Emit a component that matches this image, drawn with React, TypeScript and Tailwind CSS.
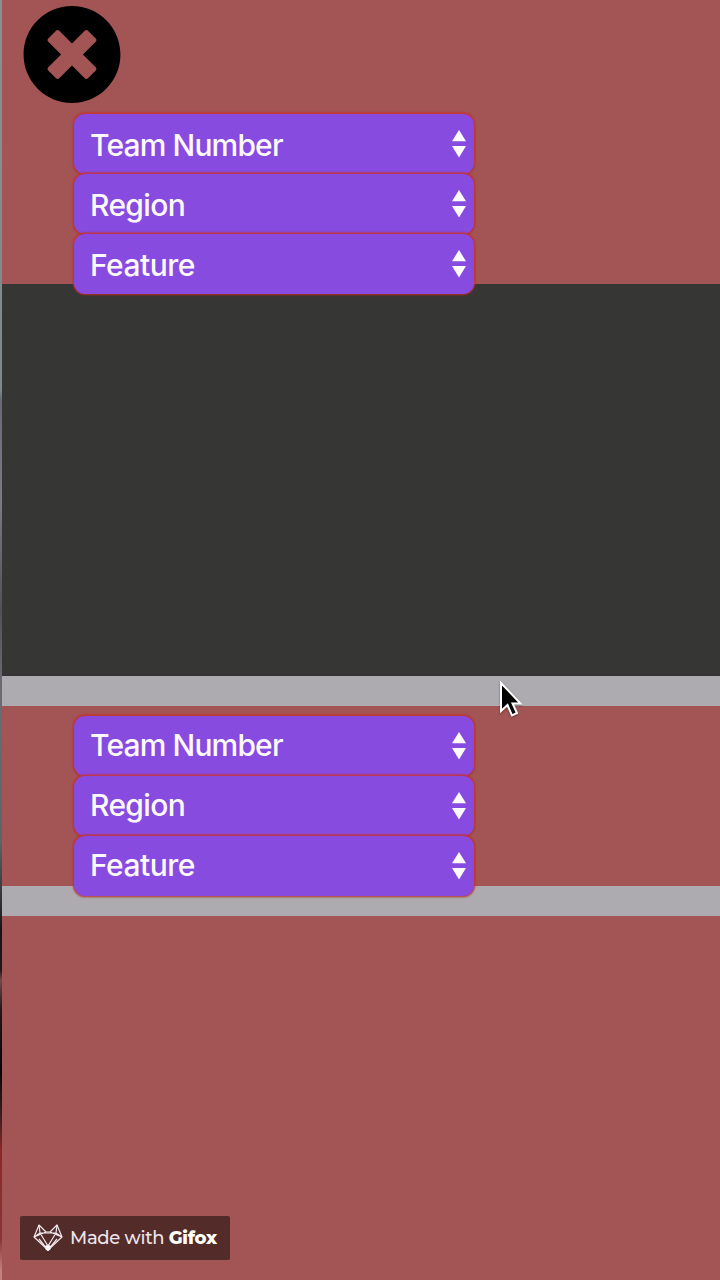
import clsx from "clsx";
import { FaTimesCircle } from "react-icons/fa";

const FIELDS = [
  { label: "Team Number", tracking: "tracking-[-0.85px]" },
  { label: "Region", tracking: "tracking-[-0.65px]" },
  { label: "Feature", tracking: "tracking-[-0.5px]" },
];

type SelectBoxProps = { label: string; tracking: string; raised?: boolean };

function SelectBox({ label, tracking, raised }: SelectBoxProps) {
  return (
    <button
      type="button"
      className="relative flex h-[60px] w-[400px] items-center justify-between rounded-[11px] bg-[#874bdf] pr-2 pl-4 text-left shadow-[0_-1px_1px_1px_rgba(200,48,50,0.45),0_0_2px_1px_rgba(205,48,34,0.8),0_1px_2px_rgba(90,20,15,0.3)]"
    >
      <span
        className={clsx(
          "text-[30px] leading-none font-medium text-[#fbf9ff]",
          tracking,
          raised ? "mb-[3px]" : "mt-[1px]",
        )}
      >
        {label}
      </span>
      <svg width="14" height="28" viewBox="0 0 14 28" fill="#fdfbff" className="block">
        <path d="M7 0 14 11.3H0ZM0 16H14L7 27.5Z" />
      </svg>
    </button>
  );
}

function SelectGroup({ raised }: { raised?: boolean }) {
  return (
    <div className="ml-[72px] flex w-[400px] flex-col">
      {FIELDS.map((field) => (
        <SelectBox key={field.label} {...field} raised={raised} />
      ))}
    </div>
  );
}

function FoxLogo() {
  return (
    <svg
      width="30"
      height="28"
      viewBox="0 0 30 28"
      fill="none"
      stroke="#f1e9ee"
      strokeWidth="1.2"
      strokeLinejoin="round"
      className="block"
    >
      <path d="M1 13 6 1 13 8H17L24 1 29 13 15 26Z" />
      <path d="M1 13 13 8M29 13 17 8M6 1 7 9H23L24 1M7 9 15 22 23 9M1 13 7 9M29 13 23 9M6 15 15 26 24 15" />
      <path d="M12.5 22.5 15 21 17.5 22.5 17 25 15 26.5 13 25Z" fill="#ffffff" />
    </svg>
  );
}

export default function App() {
  return (
    <div className="relative flex h-[1280px] w-[720px] overflow-hidden bg-[#a35454] font-['Inter','Liberation_Sans',sans-serif]">
      <div className="w-[2px] shrink-0 bg-[linear-gradient(to_bottom,#8a9193_0,#7d898b_390px,#68697a_400px,#7b7b86_500px,#555058_610px,#6c6c75_690px,#60626a_840px,#333136_900px,#161316_930px,#211719_970px,#72494a_980px,#241518_1010px,#080506_1070px,#431f21_1120px,#8b2828_1150px,#8b3535_1240px,#c38080_1270px)]" />
      <main className="flex w-[718px] flex-col">
        <section className="h-[284px] shrink-0">
          <FaTimesCircle size={100} color="#000000" className="mt-[4px] ml-5 block translate-y-[0.5px]" />
          <div className="mt-[10px]">
            <SelectGroup />
          </div>
        </section>
        <div className="h-[392px] shrink-0 border-b-2 border-[#373334] bg-[#363735]" />
        <div className="h-[30px] shrink-0 bg-[#adabaf]" />
        <section className="relative z-10 h-[180px] shrink-0 pt-[10px]">
          <SelectGroup raised />
        </section>
        <div className="h-[30px] shrink-0 bg-[#adabaf]" />
        <footer className="flex grow items-end pb-5 pl-[18px]">
          <div className="flex h-11 w-[210px] items-center rounded-[2px] bg-[#532b28] pl-[13px] font-['Montserrat','Inter',sans-serif]">
            <FoxLogo />
            <span className="ml-[7px] text-[18px] leading-none font-medium tracking-[-0.3px] whitespace-nowrap text-[#eee5ed]">
              Made with <b className="font-extrabold text-white">Gifox</b>
            </span>
          </div>
        </footer>
      </main>
      <svg
        width="30"
        height="42"
        viewBox="0 0 30 42"
        className="absolute top-[678px] left-[497px] z-20 drop-shadow-[0_1px_1px_rgba(0,0,0,0.35)]"
      >
        <path
          d="M4 5V33L10.5 27 15 37.3 20 35 15.5 25.5H23.5Z"
          fill="#000000"
          stroke="#ffffff"
          strokeWidth="2"
        />
      </svg>
    </div>
  );
}
